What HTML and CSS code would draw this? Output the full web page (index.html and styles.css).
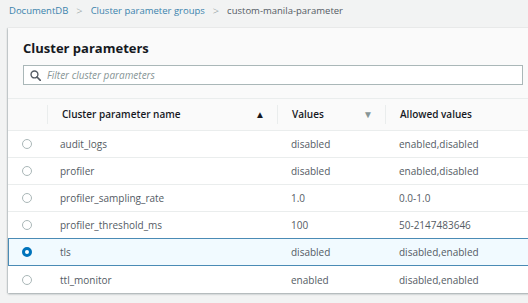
FILE: index.html
```html
<!DOCTYPE html>
<html lang="en">

<head>
    <meta charset="UTF-8">
    <meta name="viewport" content="width=device-width, initial-scale=1.0">
    <title>Cluster parameters</title>
    <link rel="stylesheet" href="styles.css">
</head>

<body>
    <nav class="breadcrumb">
        <a href="#">DocumentDB</a>
        <span class="sep">&gt;</span>
        <a href="#">Cluster parameter groups</a>
        <span class="sep">&gt;</span>
        <span class="current">custom-manila-parameter</span>
    </nav>

    <section class="card">
        <div class="card-head">
            <h2>Cluster parameters</h2>
            <label class="filter">
                <svg class="search-icon" width="11" height="11" viewBox="0 0 16 16">
                    <circle cx="6.5" cy="6.5" r="5" fill="none" stroke="#545b64" stroke-width="2"/>
                    <line x1="10.2" y1="10.2" x2="15" y2="15" stroke="#545b64" stroke-width="2.4" stroke-linecap="round"/>
                </svg>
                <input type="text" placeholder="Filter cluster parameters">
            </label>
        </div>

        <div class="grid">
            <div class="row head">
                <div class="cell"></div>
                <div class="cell sep-left">Cluster parameter name <span class="sort">&#9650;</span></div>
                <div class="cell sep-left">Values <span class="sort muted">&#9660;</span></div>
                <div class="cell sep-left">Allowed values</div>
            </div>
            <div class="row">
                <div class="cell radio-cell"><span class="radio"></span></div>
                <div class="cell name">audit_logs</div>
                <div class="cell">disabled</div>
                <div class="cell">enabled,disabled</div>
            </div>
            <div class="row">
                <div class="cell radio-cell"><span class="radio"></span></div>
                <div class="cell name">profiler</div>
                <div class="cell">disabled</div>
                <div class="cell">enabled,disabled</div>
            </div>
            <div class="row">
                <div class="cell radio-cell"><span class="radio"></span></div>
                <div class="cell name">profiler_sampling_rate</div>
                <div class="cell">1.0</div>
                <div class="cell">0.0-1.0</div>
            </div>
            <div class="row">
                <div class="cell radio-cell"><span class="radio"></span></div>
                <div class="cell name">profiler_threshold_ms</div>
                <div class="cell">100</div>
                <div class="cell">50-2147483646</div>
            </div>
            <div class="row selected">
                <div class="cell radio-cell"><span class="radio checked"></span></div>
                <div class="cell name">tls</div>
                <div class="cell">disabled</div>
                <div class="cell">disabled,enabled</div>
            </div>
            <div class="row last">
                <div class="cell radio-cell"><span class="radio"></span></div>
                <div class="cell name">ttl_monitor</div>
                <div class="cell">enabled</div>
                <div class="cell">disabled,enabled</div>
            </div>
        </div>
    </section>
</body>

</html>
```

FILE: styles.css
```css
body {
    margin: 0;
    background-color: #f2f3f3;
    font-family: 'Open Sans', sans-serif;
    font-size: 10px;
    color: #545b64;
    overflow: hidden;
    height: 303px;
}

.breadcrumb {
    height: 20px;
    padding: 0 0 0 9px;
    display: flex;
    align-items: center;
    gap: 8px;
    font-size: 9.5px;
}

.breadcrumb a {
    color: #3b83ad;
    text-decoration: none;
}

.breadcrumb .sep {
    color: #879596;
    font-size: 11px;
    font-weight: 300;
}

.breadcrumb .current {
    color: #545b64;
}

.card {
    margin: 8px 0 0 8px;
    width: 530px;
    background-color: #fafafa;
    box-shadow: 0 1px 2px rgba(0, 28, 36, 0.35), -1px 0 1px rgba(0, 28, 36, 0.1);
}

.card-head {
    padding: 11px 6px 13px 15px;
    border-bottom: 1px solid #eaeded;
}

h2 {
    margin: 0 0 8px 0;
    font-size: 13px;
    line-height: 18px;
    font-weight: 700;
    color: #16191f;
}

.filter {
    display: flex;
    align-items: center;
    height: 20px;
    width: 500px;
    border: 1px solid #aab7b8;
    background-color: #fff;
    box-sizing: border-box;
    padding-left: 6px;
    gap: 6px;
}

.filter input {
    border: none;
    outline: none;
    flex: 1;
    padding: 0;
    font-family: inherit;
    font-size: 10px;
    font-style: italic;
    background: transparent;
}

.filter input::placeholder {
    color: #879596;
}

.grid {
    display: flex;
    flex-direction: column;
}

.row {
    display: grid;
    grid-template-columns: 39px 230px 108px 1fr;
    height: 27px;
    box-sizing: border-box;
    border-bottom: 1px solid #eaeded;
    background-color: #fff;
    align-items: center;
}

.row.head {
    height: 32px;
    background-color: #fafafa;
    font-weight: 600;
    color: #16191f;
}

.row.last {
    border-bottom: none;
}

.row.selected {
    background-color: #f1faff;
    border-bottom: none;
    box-shadow: inset 0 0 0 1px #4a8bb5;
    margin-top: -1px;
    height: 28px;
}

.cell {
    padding-left: 14px;
    white-space: nowrap;
}

.cell.sep-left {
    border-left: 1px solid #eaeded;
    height: 19px;
    line-height: 19px;
    display: flex;
    align-items: center;
    padding-right: 12px;
}

.cell.sep-left .sort {
    margin-left: auto;
    font-size: 10px;
    color: #16191f;
}

.cell.sep-left .sort.muted {
    color: #879596;
}

.radio-cell {
    padding-left: 14px;
    display: flex;
    align-items: center;
}

.radio {
    width: 10px;
    height: 10px;
    border-radius: 50%;
    border: 1px solid #aab7b8;
    box-sizing: border-box;
    background-color: #fff;
}

.radio.checked {
    border: 3px solid #0073bb;
}

.cell.name {
    padding-left: 13px;
}
```
